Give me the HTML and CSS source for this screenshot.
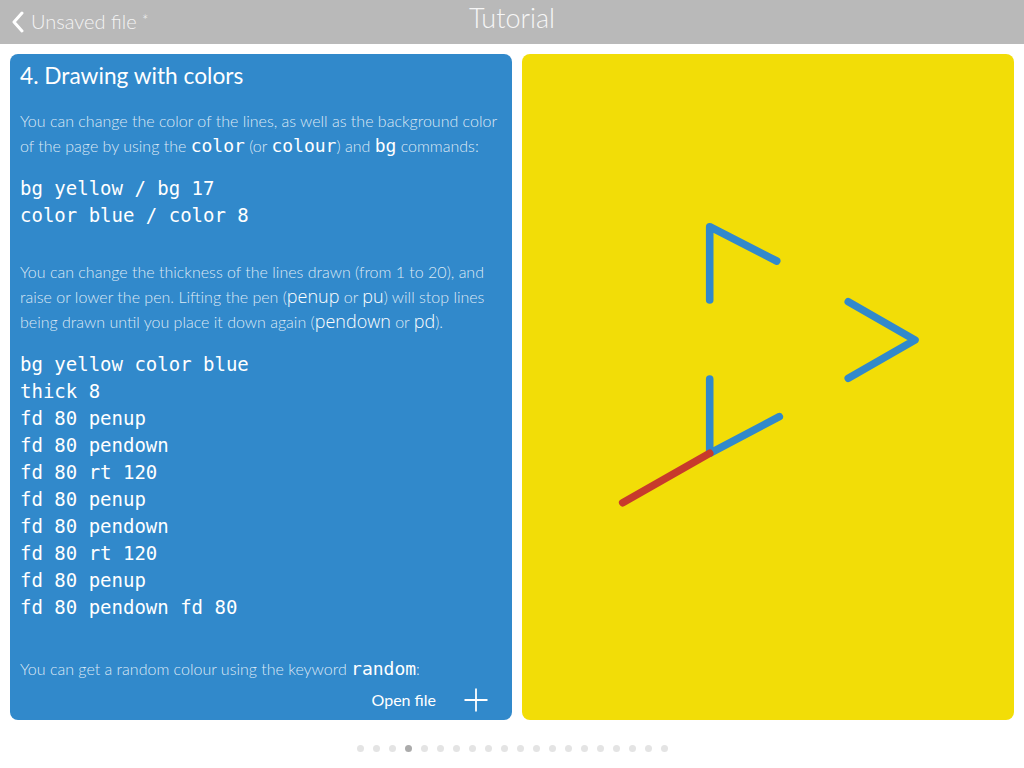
FILE: index.html
```html
<!DOCTYPE html>
<html>
<head>
<meta charset="utf-8">
<link rel="stylesheet" href="styles.css">
</head>
<body>
<header class="topbar">
  <div class="back">
    <svg class="chev" width="14" height="22" viewBox="0 0 14 22"><path d="M11 2 L3 11 L11 20" fill="none" stroke="#fff" stroke-width="3" stroke-linecap="round" stroke-linejoin="round"/></svg>
    <span class="filename">Unsaved file <span class="star">*</span></span>
  </div>
  <div class="title">Tutorial</div>
</header>
<main class="panes">
  <section class="lesson">
    <div class="lesson-body">
      <h2 class="lesson-title">4. Drawing with colors</h2>
      <p class="txt p1">You can change the color of the lines, as well as the background color of the page by using the <code class="kw">color</code> (or <code class="kw">colour</code>) and <code class="kw">bg</code> commands:</p>
      <pre class="code c1">bg yellow / bg 17
color blue / color 8</pre>
      <p class="txt p2">You can change the thickness of the lines drawn (from 1 to 20), and raise or lower the pen. Lifting the pen (<span class="cmd">penup</span> or <span class="cmd">pu</span>) will stop lines being drawn until you place it down again (<span class="cmd">pendown</span> or <span class="cmd">pd</span>).</p>
      <pre class="code c2">bg yellow color blue
thick 8
fd 80 penup
fd 80 pendown
fd 80 rt 120
fd 80 penup
fd 80 pendown
fd 80 rt 120
fd 80 penup
fd 80 pendown fd 80</pre>
      <p class="txt p3">You can get a random colour using the keyword <code class="kw">random</code>:</p>
    </div>
    <div class="lesson-actions">
      <span class="open">Open file</span>
      <svg class="plus" width="24" height="24" viewBox="0 0 24 24"><path d="M12 0.5 V23.5 M0.5 12 H23.5" stroke="#fff" stroke-width="1.8"/></svg>
    </div>
  </section>
  <section class="canvas">
    <svg class="drawing" width="492" height="666" viewBox="0 0 492 666">
      <g fill="none" stroke="#3189cb" stroke-width="7.6" stroke-linecap="round" stroke-linejoin="round">
        <polyline points="187.7,246 187.7,172.7 254.7,207"/>
        <polyline points="326.3,247.7 393,286 326.3,324.3"/>
        <polyline points="187.7,325 187.7,399.3 257.3,362.7"/>
      </g>
      <line x1="187.7" y1="399.3" x2="100.7" y2="448.7" stroke="#c73a2c" stroke-width="7.6" stroke-linecap="round"/>
    </svg>
  </section>
</main>
<nav class="pager">
  <span class="dot"></span><span class="dot"></span><span class="dot"></span><span class="dot active"></span><span class="dot"></span><span class="dot"></span><span class="dot"></span><span class="dot"></span><span class="dot"></span><span class="dot"></span><span class="dot"></span><span class="dot"></span><span class="dot"></span><span class="dot"></span><span class="dot"></span><span class="dot"></span><span class="dot"></span><span class="dot"></span><span class="dot"></span><span class="dot"></span>
</nav>
</body>
</html>
```
FILE: styles.css
```css
html, body {
  margin: 0;
  padding: 0;
  background: #fff;
  width: 1024px;
  height: 768px;
  overflow: hidden;
  font-family: Lato, "Open Sans", sans-serif;
}

.topbar {
  position: relative;
  height: 44px;
  background: #b9b9b9;
  display: flex;
  align-items: center;
}

.back {
  display: flex;
  align-items: center;
  padding-left: 11px;
  gap: 6px;
  color: #f4f4f4;
}

.chev {
  display: block;
}

.filename {
  font-weight: 300;
  font-size: 20px;
  line-height: 24px;
  position: relative;
  top: -2px;
}

.star {
  font-size: 15px;
  vertical-align: 3px;
}

.title {
  position: absolute;
  left: 0;
  right: 0;
  top: 0;
  height: 40px;
  text-align: center;
  font-weight: 300;
  font-size: 27px;
  line-height: 36px;
  color: #f6f6f6;
  pointer-events: none;
}

.panes {
  display: flex;
  gap: 10px;
  padding: 10px 10px 0;
  height: 666px;
}

.lesson {
  position: relative;
  flex: 0 0 502px;
  background: #3189cb;
  border-radius: 8px;
  overflow: hidden;
}

.lesson-body {
  padding: 7px 2px 0 10px;
  color: #fff;
}

.lesson-title {
  margin: 0;
  font-weight: 400;
  font-size: 22.7px;
  line-height: 30px;
  color: #fff;
}

.txt {
  margin: 0;
  font-weight: 300;
  font-size: 16px;
  line-height: 25px;
  color: rgba(255, 255, 255, 0.84);
}

.p1 { margin-top: 17px; }
.c1 { margin-top: 17px; }
.p2 { margin-top: 30px; }
.c2 { margin-top: 17px; }
.p3 { margin-top: 35px; }

.kw {
  font-family: "DejaVu Sans Mono", monospace;
  font-size: 18px;
  line-height: 1;
  color: #fff;
}

.cmd {
  font-family: "Open Sans", sans-serif;
  font-size: 18px;
  line-height: 1;
  color: #fff;
}

.code {
  margin-bottom: 0;
  font-family: "DejaVu Sans Mono", monospace;
  font-size: 19px;
  line-height: 27px;
  color: #fff;
}

.lesson-actions {
  position: absolute;
  right: 24px;
  bottom: 8px;
  display: flex;
  align-items: center;
  gap: 28px;
  color: #fff;
}

.open {
  font-size: 16px;
  line-height: 24px;
  font-weight: 400;
}

.plus {
  display: block;
}

.canvas {
  flex: 0 0 492px;
  background: #f2dd07;
  border-radius: 8px;
  overflow: hidden;
}

.drawing {
  display: block;
}

.pager {
  display: flex;
  justify-content: center;
  gap: 9px;
  padding-top: 25px;
}

.dot {
  width: 7px;
  height: 7px;
  border-radius: 50%;
  background: #e4e4e4;
}

.dot.active {
  background: #ababab;
}
```
